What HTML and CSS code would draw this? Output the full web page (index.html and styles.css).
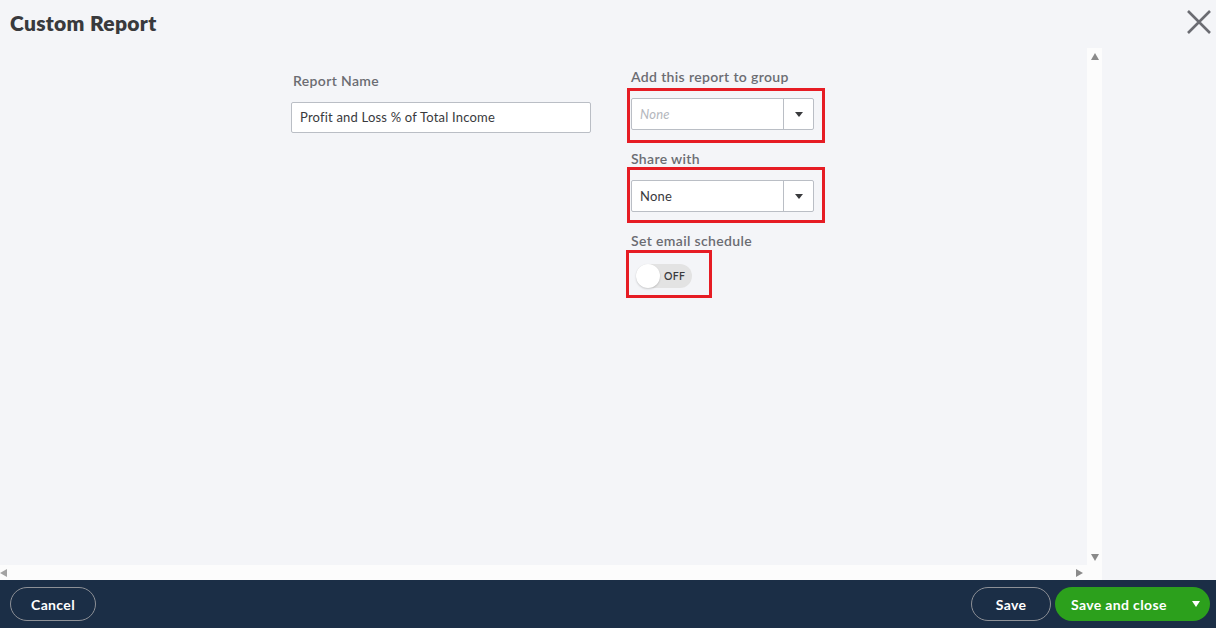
FILE: index.html
```html
<!DOCTYPE html>
<html lang="en">
<head>
<meta charset="utf-8">
<title>Custom Report</title>
<link rel="stylesheet" href="styles.css">
</head>
<body>
<div class="page">
  <header class="header">
    <h1 class="title">Custom Report</h1>
    <button class="close" aria-label="Close">
      <svg width="24" height="24" viewBox="0 0 24 24"><path d="M1 1 L23 23 M23 1 L1 23" stroke="#6b6c72" stroke-width="2.6" fill="none"/></svg>
    </button>
  </header>
  <main class="main">
    <div class="scroller">
      <div class="viewport">
        <div class="form">
          <div class="col col-left">
            <div class="field">
              <label class="label">Report Name</label>
              <div class="input">Profit and Loss % of Total Income</div>
            </div>
          </div>
          <div class="col col-right">
            <div class="field">
              <label class="label">Add this report to group</label>
              <div class="select">
                <span class="select-value placeholder">None</span>
                <span class="select-caret"><span class="tri"></span></span>
                <span class="mark mark-group"></span>
              </div>
            </div>
            <div class="field">
              <label class="label">Share with</label>
              <div class="select">
                <span class="select-value">None</span>
                <span class="select-caret"><span class="tri"></span></span>
                <span class="mark mark-share"></span>
              </div>
            </div>
            <div class="field">
              <label class="label label-toggle">Set email schedule</label>
              <div class="toggle">
                <span class="knob"></span>
                <span class="toggle-text">OFF</span>
                <span class="mark mark-toggle"></span>
              </div>
            </div>
          </div>
        </div>
      </div>
      <div class="vbar"><span class="arr arr-up"></span><span class="arr arr-down"></span></div>
      <div class="hbar"><span class="arr arr-left"></span><span class="arr arr-right"></span></div>
      <div class="corner"></div>
    </div>
    <div class="side"></div>
  </main>
  <footer class="footer">
    <button class="btn btn-outline btn-cancel">Cancel</button>
    <div class="footer-right">
      <button class="btn btn-outline btn-save">Save</button>
      <button class="btn btn-primary">Save and close<span class="btn-caret"></span></button>
    </div>
  </footer>
</div>
</body>
</html>
```
FILE: styles.css
```css
* { box-sizing: border-box; }
html, body { margin: 0; padding: 0; }
body {
  background: #f4f5f8;
  font-family: Lato, "Open Sans", Arial, sans-serif;
  color: #393a3d;
}
.page {
  width: 1216px;
  height: 628px;
  display: flex;
  flex-direction: column;
}
.header {
  height: 48px;
  display: flex;
  align-items: flex-start;
  justify-content: space-between;
  padding: 0 5px 0 10px;
}
.title {
  margin: 9px 0 0;
  font-size: 21px;
  line-height: 27px;
  font-weight: 800;
  letter-spacing: 0.3px;
  color: #393a3d;
}
.close {
  margin-top: 10px;
  padding: 0;
  border: 0;
  background: none;
  width: 24px;
  height: 24px;
}
.close svg { display: block; }
.main {
  flex: 1;
  display: flex;
  min-height: 0;
}
.scroller {
  width: 1102px;
  display: grid;
  grid-template-columns: 1fr 15px;
  grid-template-rows: 1fr 15px;
}
.viewport { min-height: 0; }
.vbar, .hbar, .corner { background: #fcfcfc; }
.vbar {
  display: flex;
  flex-direction: column;
  align-items: center;
  justify-content: space-between;
  padding: 5px 0 4px;
}
.hbar {
  display: flex;
  align-items: center;
  justify-content: space-between;
  padding: 0 4px 0 0;
}
.arr { width: 0; height: 0; display: block; }
.arr-up { border-left: 4px solid transparent; border-right: 4px solid transparent; border-bottom: 7px solid #8a8a8a; }
.arr-down { border-left: 4px solid transparent; border-right: 4px solid transparent; border-top: 7px solid #8a8a8a; }
.arr-left { border-top: 4.5px solid transparent; border-bottom: 4.5px solid transparent; border-right: 7px solid #a3a3a3; }
.arr-right { border-top: 4.5px solid transparent; border-bottom: 4.5px solid transparent; border-left: 7px solid #8a8a8a; }
.side { flex: 1; }

.form {
  display: flex;
  gap: 40px;
  padding: 19px 0 0 291px;
}
.col-left { width: 300px; padding-top: 4px; }
.col-right { width: 183px; }
.field { margin-bottom: 19px; }
.label {
  display: block;
  font-size: 14px;
  line-height: 20px;
  font-weight: 600;
  letter-spacing: 0.35px;
  color: #6b6c72;
  margin-bottom: 11px;
}
.col-left .label { padding-left: 2px; }
.label-toggle { margin-bottom: 13px; }
.input {
  height: 31px;
  background: #fff;
  border: 1px solid #babec5;
  border-radius: 2px;
  padding: 0 8px;
  font-size: 13px;
  line-height: 29px;
  letter-spacing: 0.2px;
  color: #393a3d;
}
.select {
  position: relative;
  height: 32px;
  display: flex;
  background: #fff;
  border: 1px solid #babec5;
  border-radius: 2px;
}
.select-value {
  flex: 1;
  padding-left: 8px;
  font-size: 13px;
  line-height: 30px;
  letter-spacing: 0.2px;
  color: #393a3d;
}
.placeholder { font-style: italic; color: #b4b7bd; }
.select-caret {
  width: 30px;
  border-left: 1px solid #babec5;
  display: flex;
  align-items: center;
  justify-content: center;
}
.tri {
  width: 0; height: 0;
  border-left: 4.5px solid transparent;
  border-right: 4.5px solid transparent;
  border-top: 5px solid #393a3d;
}
.toggle {
  position: relative;
  width: 56px;
  height: 24px;
  margin-left: 5px;
  border-radius: 12px;
  background: #e3e3e3;
  display: flex;
  align-items: center;
}
.knob {
  width: 24px;
  height: 24px;
  border-radius: 50%;
  background: #fff;
  box-shadow: 0 1px 2px rgba(0,0,0,0.18);
}
.toggle-text {
  margin-left: 4px;
  font-size: 10.5px;
  font-weight: 600;
  color: #393a3d;
  letter-spacing: 0.3px;
}
.mark {
  position: absolute;
  border: 3px solid #e61c24;
  pointer-events: none;
}
.mark-group { left: -5px; top: -11px; width: 198px; height: 55px; }
.mark-share { left: -5px; top: -14px; width: 198px; height: 56px; }
.mark-toggle { left: -10px; top: -14px; width: 86px; height: 48px; }

.footer {
  height: 48px;
  background: #1b2e46;
  display: flex;
  align-items: center;
  justify-content: space-between;
  padding: 0 6px 0 10px;
}
.footer-right { display: flex; gap: 4px; }
.btn {
  height: 34px;
  border-radius: 17px;
  font-family: Lato, "Open Sans", Arial, sans-serif;
  font-size: 14px;
  font-weight: 700;
  letter-spacing: 0.35px;
  color: #fff;
  padding: 0;
  display: flex;
  align-items: center;
  justify-content: center;
}
.btn-outline { background: transparent; border: 1px solid #8d9096; }
.btn-cancel { width: 86px; }
.btn-save { width: 80px; }
.btn-primary {
  width: 155px;
  background: #2ca01c;
  border: 0;
  justify-content: flex-start;
  padding-left: 16px;
}
.btn-caret {
  margin-left: auto;
  margin-right: 10px;
  width: 0; height: 0;
  border-left: 4.5px solid transparent;
  border-right: 4.5px solid transparent;
  border-top: 6px solid #fff;
}
```
